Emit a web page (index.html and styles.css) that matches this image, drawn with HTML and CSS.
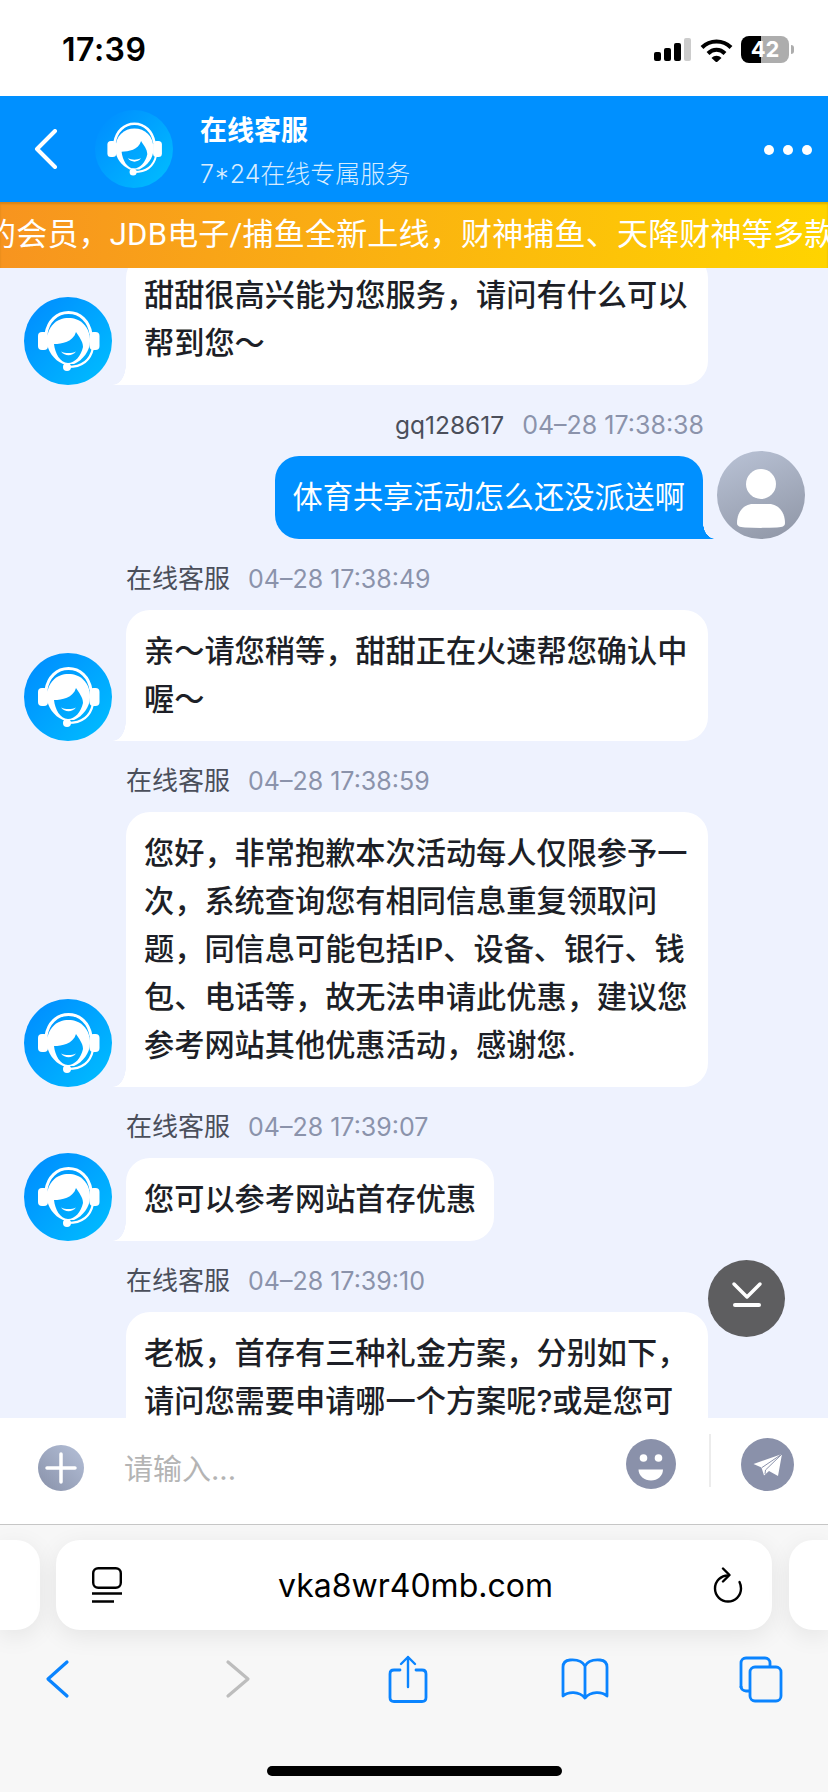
FILE: index.html
```html
<!DOCTYPE html>
<html lang="zh-CN">
<head>
  <meta charset="UTF-8" />
  <title>在线客服</title>
  <link rel="stylesheet" href="styles.css">
</head>
<body>

  <!-- Shared drawings -->
  <svg class="svg-defs" aria-hidden="true">
    <defs>
      <linearGradient id="agentBg" gradientUnits="userSpaceOnUse" x1="8" y1="12" x2="80" y2="76">
        <stop offset="0" stop-color="#0090ff" />
        <stop offset="1" stop-color="#00b9ff" />
      </linearGradient>
      <linearGradient id="userBg" x1="0.3" y1="0" x2="0.7" y2="1">
        <stop offset="0" stop-color="#b6bfd2" />
        <stop offset="1" stop-color="#9299a9" />
      </linearGradient>
      <linearGradient id="plusBg" x1="0" y1="1" x2="1" y2="0">
        <stop offset="0" stop-color="#8891a9" />
        <stop offset="1" stop-color="#b5c0d8" />
      </linearGradient>
      <symbol id="agent" viewBox="0 0 88 88">
        <circle cx="44" cy="44" r="44" fill="url(#agentBg)" />
        <path d="M22 37C24 24 33 15.500 44.500 15.500S65 24 67 37" fill="none" stroke="#fff" stroke-width="3" />
        <rect x="14" y="35" width="10" height="18" rx="4" fill="#fff" />
        <rect x="65.500" y="35" width="10" height="18" rx="4" fill="#fff" />
        <path d="M23 44C23 29 33 21 44.500 21S66 29 66 44C66 54 59 63 50 67H39C30 63 23 54 23 44Z" fill="#fff" />
        <path d="M30 47C38 47 49 45 52 35C55 40 59 44 59 50C57 59 51 66 44 66C36 66 31 56 30 47Z" fill="url(#agentBg)" />
        <path d="M37 54.500C41 59.500 48 59.500 52 54.500C48 56.500 41 56.500 37 54.500Z" fill="#fff" />
        <circle cx="43" cy="70" r="4" fill="#fff" />
        <path d="M44 70C56 70 66 65 69 51" fill="none" stroke="#fff" stroke-width="2.200" />
      </symbol>
    </defs>
  </svg>

  <!-- Phone status bar -->
  <div class="status-bar">
    <span class="status-time">17:39</span>
    <div class="status-icons">
      <svg width="38" height="24" viewBox="0 0 38 24">
        <rect x="0" y="14" width="7" height="9" rx="2" fill="#000" />
        <rect x="10" y="10" width="7" height="13" rx="2" fill="#000" />
        <rect x="20" y="5" width="7" height="18" rx="2" fill="#000" />
        <rect x="30" y="0" width="7" height="23" rx="2" fill="#ccc" />
      </svg>
      <svg width="33" height="24" viewBox="0 0 33 24">
        <path d="M2 9.500C10 1.500 23 1.500 31 9.500" fill="none" stroke="#000" stroke-width="4" />
        <path d="M8 15.500C13 10.500 20 10.500 25 15.500" fill="none" stroke="#000" stroke-width="4" />
        <path d="M11.500 20L16.500 24.500L21.500 20C18.500 17 14.500 17 11.500 20Z" fill="#000" />
      </svg>
      <div class="battery">42</div>
    </div>
  </div>

  <!-- Chat header -->
  <div class="chat-header">
    <svg class="back-icon" width="24" height="40" viewBox="0 0 24 40">
      <path d="M21 2L3 20L21 38" fill="none" stroke="#fff" stroke-width="4" stroke-linecap="round" stroke-linejoin="round" />
    </svg>
    <svg class="header-avatar" width="78" height="78"><use href="#agent" /></svg>
    <div class="header-info">
      <h1>在线客服</h1>
      <p>7*24在线专属服务</p>
    </div>
    <div class="header-dots"><i></i><i></i><i></i></div>
  </div>

  <!-- Notice strip -->
  <div class="notice">
    <div class="notice-text">的会员，JDB电子/捕鱼全新上线，财神捕鱼、天降财神等多款</div>
  </div>

  <!-- Messages -->
  <div class="chat">
    <div class="msg-list">
      <div class="msg">
        <div class="msg-row">
          <svg class="avatar" width="88" height="88"><use href="#agent" /></svg>
          <div class="bubble">甜甜很高兴能为您服务，请问有什么可以帮到您～</div>
        </div>
      </div>

      <div class="msg msg-self">
        <div class="msg-meta"><span class="msg-name">gq128617</span><span class="msg-time">04–28 17:38:38</span></div>
        <div class="msg-row">
          <div class="bubble">体育共享活动怎么还没派送啊</div>
          <svg class="avatar" width="88" height="88" viewBox="0 0 88 88">
            <circle cx="44" cy="44" r="44" fill="url(#userBg)" />
            <circle cx="44" cy="33" r="15" fill="#fff" />
            <path d="M20 72C20 62 26 53 36 53H52C62 53 68 62 68 72C68 75 66 76 60 76.500C50 77 38 77 28 76.500C22 76 20 75 20 72Z" fill="#fff" />
          </svg>
        </div>
      </div>

      <div class="msg">
        <div class="msg-meta"><span class="msg-name">在线客服</span><span class="msg-time">04–28 17:38:49</span></div>
        <div class="msg-row">
          <svg class="avatar" width="88" height="88"><use href="#agent" /></svg>
          <div class="bubble">亲～请您稍等，甜甜正在火速帮您确认中喔～</div>
        </div>
      </div>

      <div class="msg">
        <div class="msg-meta"><span class="msg-name">在线客服</span><span class="msg-time">04–28 17:38:59</span></div>
        <div class="msg-row">
          <svg class="avatar" width="88" height="88"><use href="#agent" /></svg>
          <div class="bubble">您好，非常抱歉本次活动每人仅限参予一次，系统查询您有相同信息重复领取问题，同信息可能包括IP、设备、银行、钱包、电话等，故无法申请此优惠，建议您参考网站其他优惠活动，感谢您.</div>
        </div>
      </div>

      <div class="msg">
        <div class="msg-meta"><span class="msg-name">在线客服</span><span class="msg-time">04–28 17:39:07</span></div>
        <div class="msg-row">
          <svg class="avatar" width="88" height="88"><use href="#agent" /></svg>
          <div class="bubble">您可以参考网站首存优惠</div>
        </div>
      </div>

      <div class="msg">
        <div class="msg-meta"><span class="msg-name">在线客服</span><span class="msg-time">04–28 17:39:10</span></div>
        <div class="msg-row">
          <svg class="avatar" width="88" height="88"><use href="#agent" /></svg>
          <div class="bubble bubble-cut">老板，首存有三种礼金方案，分别如下，请问您需要申请哪一个方案呢?或是您可</div>
        </div>
      </div>
    </div>

    <!-- Scroll to bottom -->
    <div class="scroll-down">
      <svg width="77" height="77" viewBox="0 0 77 77">
        <path d="M26 24L39 37L52 24" fill="none" stroke="#fff" stroke-width="3.500" stroke-linecap="round" stroke-linejoin="round" />
        <rect x="25" y="43" width="28" height="4" rx="2" fill="#fff" />
      </svg>
    </div>
  </div>

  <!-- Input bar -->
  <div class="input-bar">
    <svg class="input-plus" width="46" height="46" viewBox="0 0 46 46">
      <circle cx="23" cy="23" r="23" fill="url(#plusBg)" />
      <path d="M9 23H37M23 9V37" stroke="#fff" stroke-width="3.500" stroke-linecap="round" />
    </svg>
    <div class="input-text">请输入...</div>
    <svg width="50" height="50" viewBox="0 0 50 50">
      <circle cx="25" cy="25" r="25" fill="#8a91aa" />
      <circle cx="17.500" cy="19" r="3.800" fill="#fff" />
      <circle cx="32.500" cy="19" r="3.800" fill="#fff" />
      <path d="M12.500 30.500H37C37 37 31.500 41.500 25 41.500S12.500 37 12.500 30.500Z" fill="#fff" />
    </svg>
    <div class="input-divider"></div>
    <svg width="53" height="53" viewBox="0 0 53 53">
      <circle cx="26.500" cy="26.500" r="26.500" fill="#8a91aa" />
      <path d="M41 16L12.500 26L20.500 29.500L23 37.500L28 33L37 38Z" fill="#fff" />
      <path d="M21 29.500L41 16L24.500 32L24 36" fill="none" stroke="#8a91aa" stroke-width="1" />
    </svg>
  </div>

  <!-- Safari bottom bar -->
  <div class="browser-bar">
    <div class="tab-row">
      <div class="tab-peek tab-peek-left"></div>
      <div class="address-box">
        <svg width="30" height="36" viewBox="0 0 30 36">
          <rect x="1.200" y="1.200" width="27.600" height="19.600" rx="5" fill="none" stroke="#000" stroke-width="2.400" />
          <path d="M0 26.500H30M0 34.500H22" stroke="#000" stroke-width="2.400" />
        </svg>
        <span class="address-url">vka8wr40mb.com</span>
        <svg width="30" height="36" viewBox="0 0 30 36">
          <path d="M15 8.500C8 8.500 2 14 2 21.500S8 34.500 15 34.500S28 29 28 21.500C28 19 27.500 17 26.500 15" fill="none" stroke="#000" stroke-width="2.400" stroke-linecap="round" />
          <path d="M10 1.500L16.500 8L10 14.500" fill="none" stroke="#000" stroke-width="2.400" stroke-linecap="round" stroke-linejoin="round" />
        </svg>
      </div>
      <div class="tab-peek tab-peek-right"></div>
    </div>

    <div class="toolbar">
      <svg width="46" height="48" viewBox="0 0 46 48">
        <path d="M33 7L14 24L33 41" fill="none" stroke="#0a84ff" stroke-width="3.200" stroke-linecap="round" stroke-linejoin="round" />
      </svg>
      <svg width="46" height="48" viewBox="0 0 46 48">
        <path d="M18 7L38 24L18 41" fill="none" stroke="#bdbdbd" stroke-width="3.200" stroke-linecap="round" stroke-linejoin="round" />
      </svg>
      <svg width="46" height="48" viewBox="0 0 46 48">
        <path d="M15 15H9C6.500 15 5 16.500 5 19V42.500C5 45 6.500 46.500 9 46.500H37C39.500 46.500 41 45 41 42.500V19C41 16.500 39.500 15 37 15H31" fill="none" stroke="#0a84ff" stroke-width="2.800" stroke-linecap="round" />
        <path d="M23 32V2M16 9L23 2L30 9" fill="none" stroke="#0a84ff" stroke-width="2.400" stroke-linecap="round" stroke-linejoin="round" />
      </svg>
      <svg width="48" height="48" viewBox="0 0 48 48">
        <path d="M24 11C21 5.500 15 4.500 9 5C4.500 5.500 2 8 2 12V41C7 36.500 18 36 24 43C30 36 41 36.500 46 41V12C46 8 43.500 5.500 39 5C33 4.500 27 5.500 24 11ZM24 11V43" fill="none" stroke="#0a84ff" stroke-width="2.800" stroke-linejoin="round" />
      </svg>
      <svg width="46" height="48" viewBox="0 0 46 48">
        <path d="M3 33V8C3 5 5 3 8 3H27C30 3 32 5 32 8V12" fill="none" stroke="#0a84ff" stroke-width="2.800" />
        <path d="M3 31C3 34 5 36 8 36H11" fill="none" stroke="#0a84ff" stroke-width="2.800" />
        <rect x="12" y="12" width="31" height="34" rx="5" fill="none" stroke="#0a84ff" stroke-width="2.800" />
      </svg>
    </div>

    <div class="home-indicator"></div>
  </div>

</body>
</html>
```

FILE: styles.css
```css
* {
  margin: 0;
  padding: 0;
  box-sizing: border-box;
}

body {
  font-family: "Inter", "Noto Sans CJK SC", sans-serif;
  background-color: #fff;
  display: flex;
  flex-direction: column;
  height: 1792px;
  overflow: hidden;
}

.svg-defs {
  display: block;
  width: 0;
  height: 0;
}

svg {
  flex-shrink: 0;
  display: block;
}

/* Status bar */
.status-bar {
  height: 96px;
  flex-shrink: 0;
  display: flex;
  justify-content: space-between;
  align-items: flex-start;
  padding: 32px 34px 0 62px;
}

.status-time {
  font-size: 32px;
  line-height: 36px;
  font-weight: 600;
  letter-spacing: 0.5px;
  color: #000;
}

.status-icons {
  display: flex;
  align-items: center;
  gap: 8px;
  margin-top: 4px;
}

.battery {
  position: relative;
  width: 48px;
  height: 27px;
  border-radius: 8px;
  background: linear-gradient(90deg, #000 42%, #adadad 42%);
  color: #fff;
  font-size: 22px;
  line-height: 27px;
  font-weight: 700;
  text-align: center;
  margin-right: 5px;
}

.battery::after {
  content: "";
  position: absolute;
  right: -5px;
  top: 9px;
  width: 3px;
  height: 9px;
  border-radius: 0 3px 3px 0;
  background-color: #adadad;
}

/* Chat header */
.chat-header {
  height: 106px;
  flex-shrink: 0;
  background-color: #0090ff;
  display: flex;
  align-items: center;
  padding: 0 16px 0 34px;
  color: #fff;
}

.header-avatar {
  margin-left: 37px;
}

.header-info {
  flex: 1;
  margin-left: 27px;
}

.header-info h1 {
  font-size: 27px;
  line-height: 40px;
  font-weight: 700;
  margin-top: 4px;
}

.header-info p {
  font-size: 25px;
  line-height: 36px;
  font-weight: 300;
  margin-top: 5px;
  color: rgba(255, 255, 255, 0.85);
}

.header-dots {
  display: flex;
  gap: 9px;
  margin-top: 2px;
}

.header-dots i {
  display: block;
  width: 10px;
  height: 10px;
  border-radius: 50%;
  background-color: #fff;
}

/* Notice strip */
.notice {
  height: 66px;
  flex-shrink: 0;
  overflow: hidden;
  background: linear-gradient(90deg, #f7941f, #ffd400);
  color: #fff;
  box-shadow: inset 0 2px 2px rgba(120, 80, 0, 0.25);
}

.notice-text {
  margin-left: -15px;
  white-space: nowrap;
  font-family: "Roboto", "Noto Sans CJK SC", sans-serif;
  font-size: 31px;
  line-height: 66px;
  letter-spacing: 0.2px;
}

/* Messages */
.chat {
  position: relative;
  flex: 1;
  overflow: hidden;
  background-color: #eef2fe;
}

.msg-list {
  margin-top: -14px;
  padding: 0 23px 0 24px;
}

.msg {
  margin-bottom: 23px;
}

.msg-meta {
  display: flex;
  gap: 18px;
  height: 34px;
  line-height: 34px;
  margin-bottom: 14px;
  padding-left: 102px;
}

.msg-name {
  font-size: 26px;
  color: #4b4f5b;
}

.msg-time {
  font-size: 25px;
  color: #8b93ab;
}

.msg-row {
  display: flex;
  align-items: flex-end;
  gap: 14px;
}

/* avatar sticks out a little above one-line bubbles */
.avatar {
  margin-top: -5px;
}

.bubble {
  position: relative;
  max-width: 582px;
  padding: 17px 18px 18px;
  border-radius: 24px 24px 24px 0;
  background-color: #fff;
  color: #1d1f27;
  font-size: 30.200px;
  line-height: 48px;
  font-weight: 500;
}

.bubble::before {
  content: "";
  position: absolute;
  left: -13px;
  bottom: 0;
  width: 13px;
  height: 20px;
  background: radial-gradient(ellipse 13px 20px at 0 0, transparent 97%, #fff 100%);
}

/* last message runs on below the input bar */
.bubble-cut {
  min-height: 300px;
}

.msg-self .msg-meta {
  justify-content: flex-end;
  padding-left: 0;
  padding-right: 101px;
}

.msg-self .msg-name {
  font-size: 24.500px;
}

.msg-self .msg-row {
  justify-content: flex-end;
}

.msg-self .bubble {
  border-radius: 24px 24px 0 24px;
  background-color: #0090ff;
  color: #fff;
  font-weight: 400;
}

.msg-self .bubble::before {
  left: auto;
  right: -12px;
  width: 12px;
  height: 16px;
  background: radial-gradient(ellipse 12px 16px at 100% 0, transparent 97%, #0090ff 100%);
}

.scroll-down {
  position: absolute;
  top: 992px;
  right: 43px;
  width: 77px;
  height: 77px;
  border-radius: 50%;
  background-color: #5e5e60;
}

/* Input bar */
.input-bar {
  height: 106px;
  flex-shrink: 0;
  display: flex;
  align-items: center;
  padding: 0 34px 14px 38px;
  background-color: #fff;
}

.input-plus {
  margin-top: 8px;
}

.input-text {
  flex: 1;
  margin-left: 40px;
  margin-top: 12px;
  font-size: 29px;
  line-height: 40px;
  color: #b4b4b4;
}

.input-divider {
  width: 2px;
  height: 53px;
  margin: -8px 30px 0 33px;
  background-color: #ececec;
}

/* Browser bar */
.browser-bar {
  flex-shrink: 0;
  border-top: 1px solid #c6c6c6;
  background-color: #f7f7f7;
  padding-top: 15px;
  height: 268px;
}

.tab-row {
  display: flex;
  gap: 16px;
}

.tab-peek {
  width: 40px;
  height: 90px;
  background-color: #fff;
  box-shadow: 0 6px 24px rgba(0, 0, 0, 0.08);
}

.tab-peek-left {
  border-radius: 0 24px 24px 0;
}

.tab-peek-right {
  width: 39px;
  margin-left: 1px;
  border-radius: 24px 0 0 24px;
}

.address-box {
  width: 717px;
  height: 90px;
  display: flex;
  justify-content: space-between;
  align-items: center;
  padding: 0 29px 0 36px;
  border-radius: 24px;
  background-color: #fff;
  box-shadow: 0 6px 24px rgba(0, 0, 0, 0.08);
}

.address-url {
  font-size: 32px;
  margin-right: 4px;
  color: #000;
}

.toolbar {
  display: flex;
  justify-content: space-between;
  align-items: center;
  padding: 25px 44px 0 34px;
}

.home-indicator {
  width: 295px;
  height: 10px;
  margin: 63px 0 0 267px;
  border-radius: 5px;
  background-color: #000;
}
```
